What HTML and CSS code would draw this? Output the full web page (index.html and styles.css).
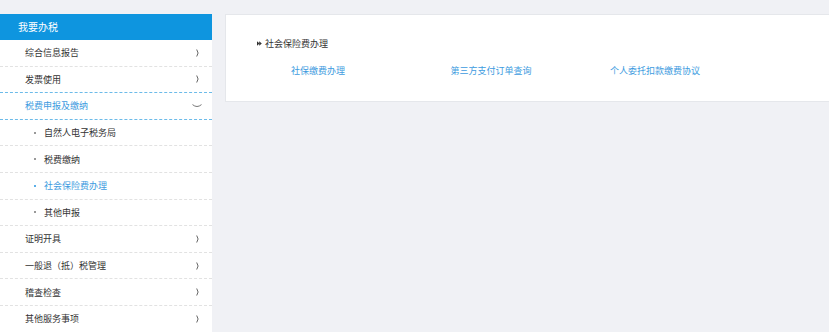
FILE: index.html
```html
<!DOCTYPE html>
<html lang="zh-CN">
<head>
  <meta charset="UTF-8" />
  <title>我要办税</title>
  <link rel="stylesheet" href="styles.css">
</head>
<body>
  <div class="page">
    <aside class="sidebar">
      <div class="side-title">我要办税</div>
      <ul class="menu">
        <li class="menu-item">
          <span>综合信息报告</span>
          <svg class="arrow-right" width="4" height="8" viewBox="0 0 4 8"><path d="M0.7 0.5 Q3.5 4 0.7 7.5" fill="none" stroke="#666" stroke-width="1"/></svg>
        </li>
        <li class="menu-item before-open">
          <span>发票使用</span>
          <svg class="arrow-right" width="4" height="8" viewBox="0 0 4 8"><path d="M0.7 0.5 Q3.5 4 0.7 7.5" fill="none" stroke="#666" stroke-width="1"/></svg>
        </li>
        <li class="menu-item open">
          <span>税费申报及缴纳</span>
          <svg class="arrow-down" width="10" height="4" viewBox="0 0 10 4"><path d="M0.5 0.6 Q5 4.4 9.5 0.6" fill="none" stroke="#777" stroke-width="1"/></svg>
        </li>
        <li class="sub-item"><i class="dot"></i><span>自然人电子税务局</span></li>
        <li class="sub-item"><i class="dot"></i><span>税费缴纳</span></li>
        <li class="sub-item active"><i class="dot"></i><span>社会保险费办理</span></li>
        <li class="sub-item"><i class="dot"></i><span>其他申报</span></li>
        <li class="menu-item">
          <span>证明开具</span>
          <svg class="arrow-right" width="4" height="8" viewBox="0 0 4 8"><path d="M0.7 0.5 Q3.5 4 0.7 7.5" fill="none" stroke="#666" stroke-width="1"/></svg>
        </li>
        <li class="menu-item">
          <span>一般退（抵）税管理</span>
          <svg class="arrow-right" width="4" height="8" viewBox="0 0 4 8"><path d="M0.7 0.5 Q3.5 4 0.7 7.5" fill="none" stroke="#666" stroke-width="1"/></svg>
        </li>
        <li class="menu-item">
          <span>稽查检查</span>
          <svg class="arrow-right" width="4" height="8" viewBox="0 0 4 8"><path d="M0.7 0.5 Q3.5 4 0.7 7.5" fill="none" stroke="#666" stroke-width="1"/></svg>
        </li>
        <li class="menu-item">
          <span>其他服务事项</span>
          <svg class="arrow-right" width="4" height="8" viewBox="0 0 4 8"><path d="M0.7 0.5 Q3.5 4 0.7 7.5" fill="none" stroke="#666" stroke-width="1"/></svg>
        </li>
      </ul>
    </aside>

    <main class="content">
      <div class="card">
        <div class="card-title">
          <svg width="5" height="5" viewBox="0 0 5 5"><polygon points="0,0.3 2.6,2.5 0,4.7" fill="#333"/><polygon points="2.2,0.3 4.8,2.5 2.2,4.7" fill="#333"/></svg>
          <span>社会保险费办理</span>
        </div>
        <div class="links">
          <a href="#">社保缴费办理</a>
          <a href="#">第三方支付订单查询</a>
          <a href="#">个人委托扣款缴费协议</a>
        </div>
      </div>
    </main>
  </div>
</body>
</html>
```

FILE: styles.css
```css
* {
  margin: 0;
  padding: 0;
  box-sizing: border-box;
}

html, body {
  height: 100%;
  overflow: hidden;
}

body {
  background: #f0f1f5;
  font-family: "Noto Sans CJK SC", "Microsoft YaHei", sans-serif;
  color: #333;
}

.page {
  display: flex;
  align-items: stretch;
  height: 100%;
  padding-top: 14px;
}

.sidebar {
  width: 212px;
  flex-shrink: 0;
  background: #fff;
}

.side-title {
  height: 26px;
  line-height: 26px;
  padding-left: 18px;
  background: #0e95df;
  color: #fff;
  font-size: 10px;
}

.menu {
  list-style: none;
}

.menu-item,
.sub-item {
  display: flex;
  align-items: center;
  height: 26.6px;
  border-bottom: 1px dashed #e2e2e2;
  font-size: 9px;
}

.menu-item {
  justify-content: space-between;
  padding: 0 12px 0 25px;
}

.menu-item.before-open {
  border-bottom-color: #6cbbe9;
}

.menu-item.open {
  color: #3d9be0;
  border-bottom-color: #6cbbe9;
  padding-right: 10px;
}

.sub-item {
  padding-left: 34px;
}

.dot {
  width: 2px;
  height: 2px;
  background: #999;
  margin-right: 8px;
}

.sub-item.active {
  color: #3d9be0;
}

.sub-item.active .dot {
  background: #5aaee8;
}

.content {
  flex: 1;
  padding-left: 13px;
}

.card {
  background: #fff;
  border: 1px solid #e5e7eb;
  border-right: none;
  padding: 22px 0 24px 31px;
}

.card-title {
  display: flex;
  align-items: center;
  height: 12px;
  font-size: 9px;
  color: #333;
}

.card-title svg {
  margin-right: 3px;
}

.links {
  display: flex;
  margin-top: 16px;
  padding-left: 34px;
  line-height: 12px;
}

.links a {
  width: 159.5px;
  font-size: 9px;
  color: #3d9be0;
  text-decoration: none;
}
```
